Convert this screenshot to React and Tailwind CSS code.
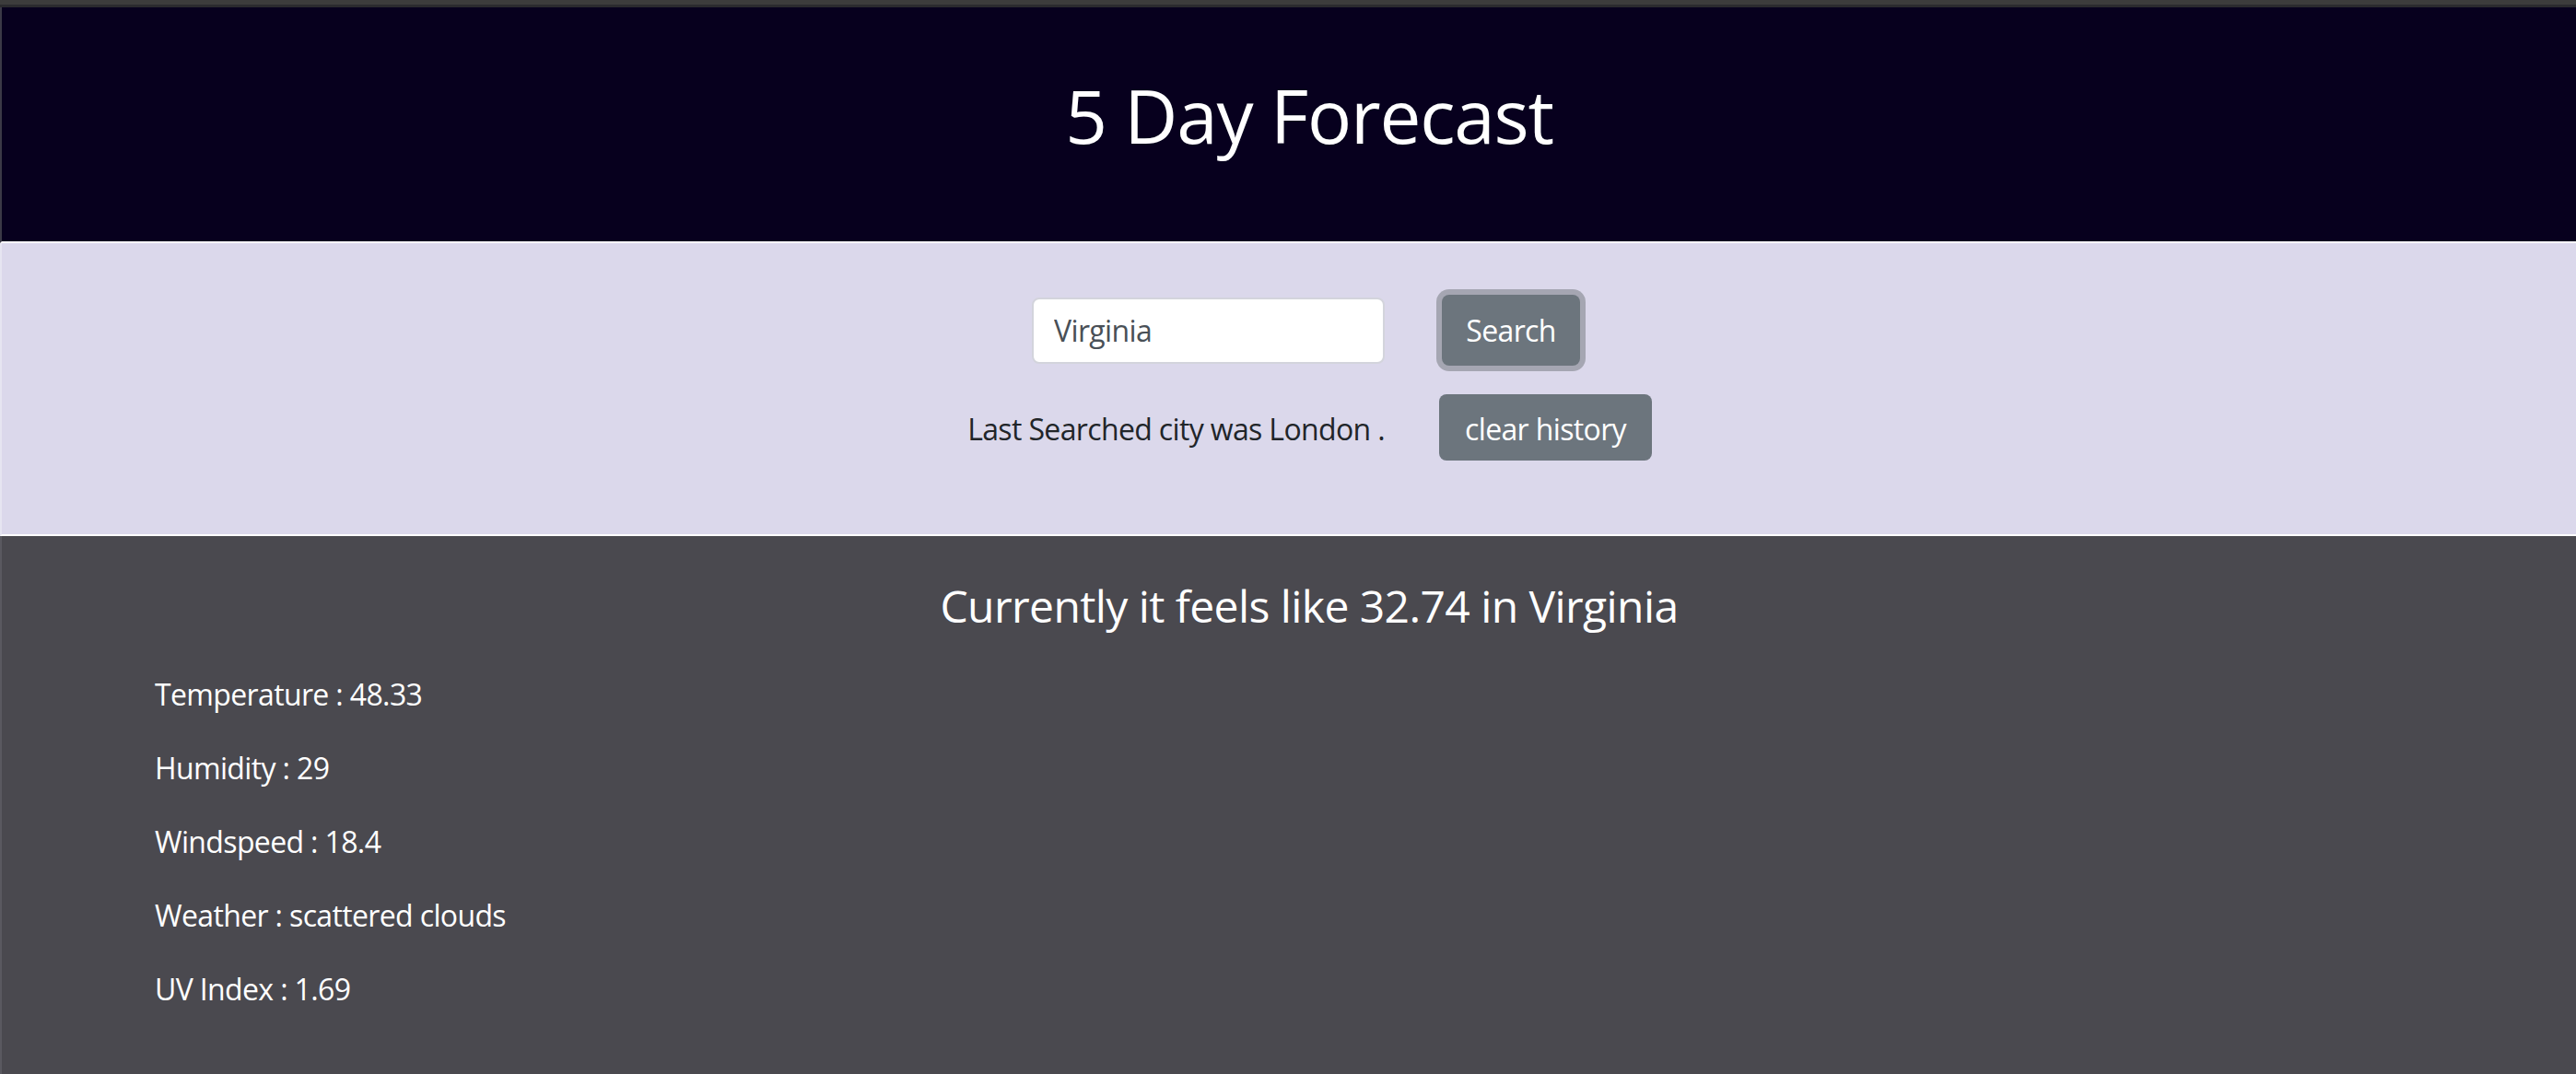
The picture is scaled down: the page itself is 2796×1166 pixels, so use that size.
const stats = [
  { label: "Temperature", value: "48.33" },
  { label: "Humidity", value: "29" },
  { label: "Windspeed", value: "18.4" },
  { label: "Weather", value: "scattered clouds" },
  { label: "UV Index", value: "1.69" },
]

function App() {
  const font = { fontFamily: '"Open Sans", "Noto Sans", sans-serif' }
  return (
    <div className="min-h-screen flex flex-col font-['Open_Sans','Noto_Sans',sans-serif]" style={font}>
      <div className="h-[5px] bg-[#3c3c3c]" />
      <div className="h-[3px] bg-[#2a2a2e]" />

      <header className="bg-[#07001e] border-l-2 border-l-[#3b3946] border-b-2 border-b-white pt-[69px] pb-[89px] pl-[44px]">
        <h1 className="text-center text-white text-[80px] leading-[96px] tracking-[-0.015em]">5 Day Forecast</h1>
      </header>

      <section className="bg-[#dbd8eb] border-l-2 border-l-[#e6e5f1] border-b-2 border-b-white pt-[56px] pb-[80px] pl-[44px] flex justify-center">
        <div className="grid grid-cols-[480px_254px] gap-x-[62px] gap-y-[31px] items-center">
          <input
            type="text"
            defaultValue="Virginia"
            className="justify-self-end w-[383px] h-[72px] bg-white border-2 border-[#d3d4dc] rounded-[8px] px-[22px] text-[32px] text-[#495057] outline-none tracking-[-0.02em]"
          />
          <button className="justify-self-start w-[150px] h-[77px] bg-[#6c757d] text-white text-[32px] rounded-[8px] ring-[6px] ring-[#a5a6b2] tracking-[-0.02em]">
            Search
          </button>
          <p className="justify-self-end text-[32px] text-[#212529] leading-[48px] pt-[4px] tracking-[-0.02em]">Last Searched city was London .</p>
          <button className="justify-self-start -ml-[3px] w-[231px] h-[72px] bg-[#6c757d] text-white text-[32px] rounded-[8px] pt-[3px] tracking-[-0.02em]">
            clear history
          </button>
        </div>
      </section>

      <main className="flex-1 bg-[#4a494f] border-l-2 border-l-[#5a5960] pt-[47px] pb-[40px]">
        <h3 className="pl-[44px] text-center text-white text-[48px] leading-[58px] tracking-[-0.012em]">
          Currently it feels like 32.74 in Virginia
        </h3>
        <div className="pl-[166px] pt-[43px]">
          {stats.map((s) => (
            <p key={s.label} className="text-white text-[32px] leading-[48px] mb-[32px] tracking-[-0.02em]">
              {s.label} : {s.value}
            </p>
          ))}
        </div>
      </main>
    </div>
  )
}

export default App
